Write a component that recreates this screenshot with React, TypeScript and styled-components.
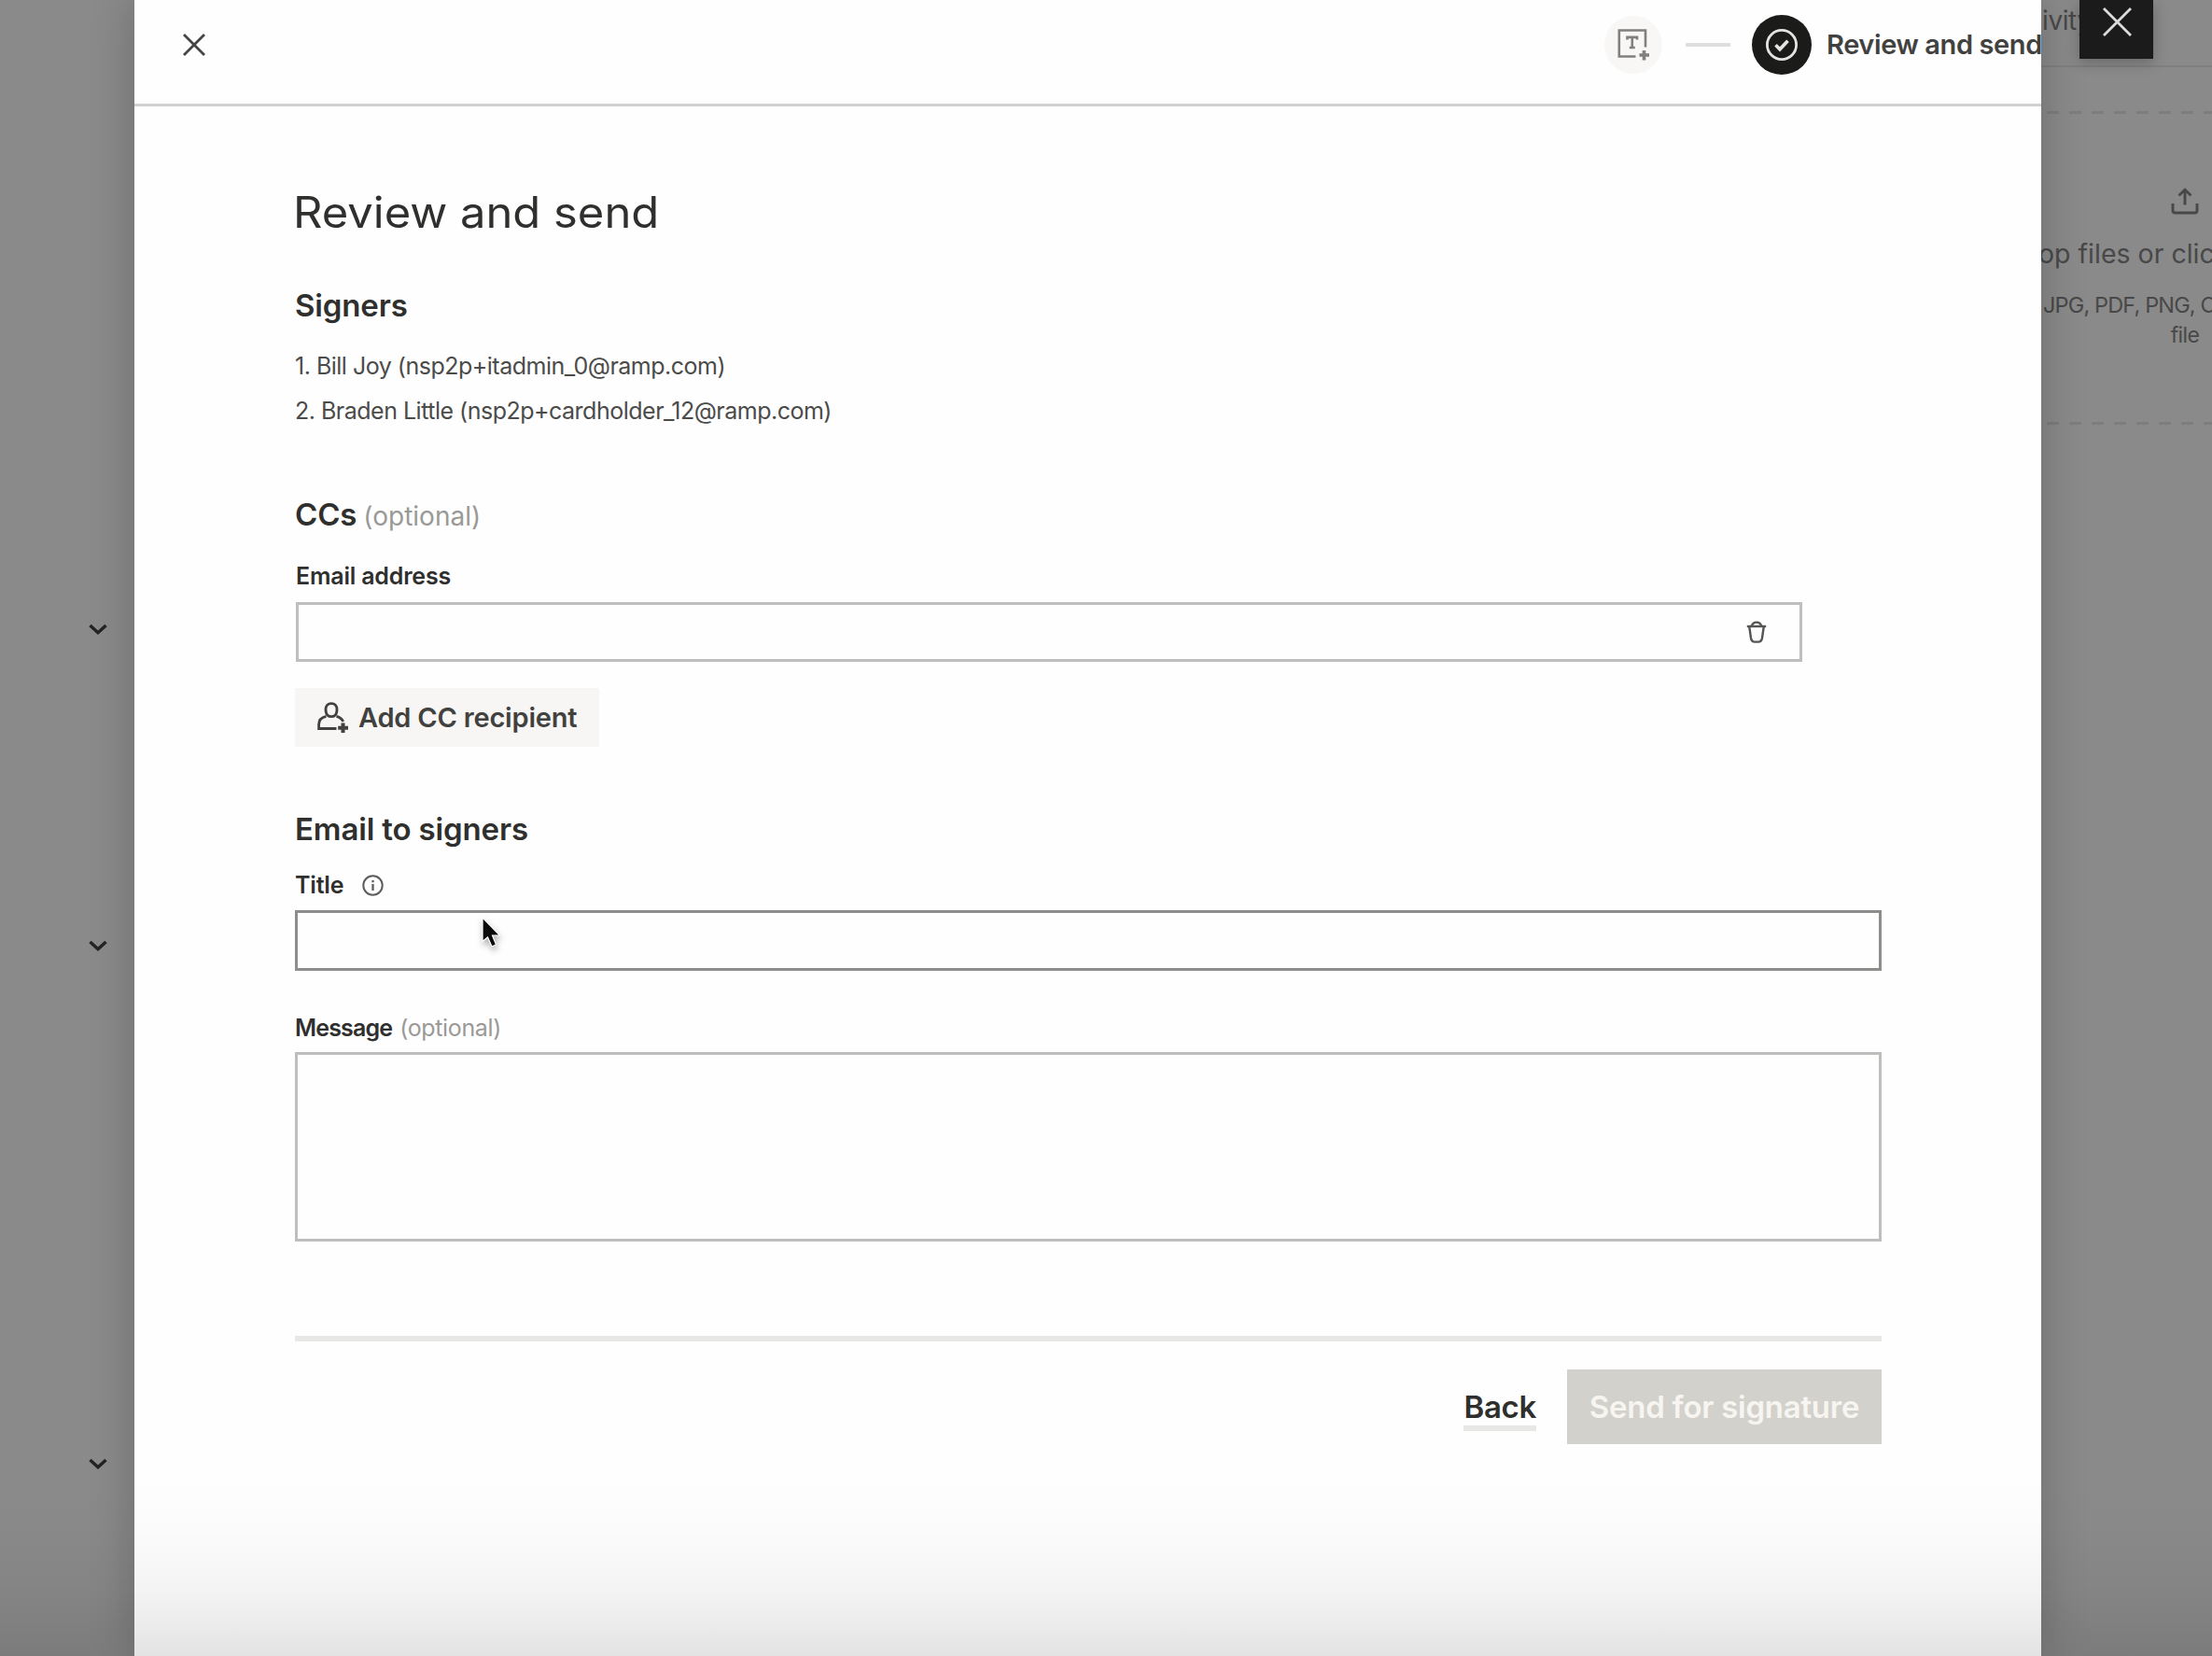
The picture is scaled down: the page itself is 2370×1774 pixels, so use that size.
import React from "react";
import styled, { createGlobalStyle } from "styled-components";

const GlobalStyle = createGlobalStyle`
  *, *::before, *::after { box-sizing: border-box; }
  body {
    margin: 0;
    background: #8a8a8a;
    font-family: Inter, "Liberation Sans", sans-serif;
    color: #2f2f2e;
  }
  svg { display: block; flex-shrink: 0; }
`;

const Screen = styled.div`
  position: relative;
  display: grid;
  grid-template-columns: 144px 2043px minmax(0, 1fr);
  width: 2370px;
  height: 1774px;
  overflow: hidden;
  background: #8a8a8a;

  &::after {
    content: "";
    position: absolute;
    z-index: 3;
    left: 0;
    right: 0;
    bottom: 0;
    height: 190px;
    pointer-events: none;
    background: linear-gradient(
      to bottom,
      rgba(0, 0, 0, 0) 0%,
      rgba(0, 0, 0, 0.012) 30%,
      rgba(0, 0, 0, 0.045) 65%,
      rgba(0, 0, 0, 0.105) 100%
    );
  }
`;

const Sidebar = styled.aside`
  display: flex;
  flex-direction: column;
  align-items: flex-end;
  padding: 668px 29px 0 0;
`;

const ChevronSlot = styled.div<{ $height: number }>`
  height: ${(p) => p.$height}px;
`;

const Modal = styled.main`
  position: relative;
  z-index: 1;
  display: flex;
  flex-direction: column;
  background: #fefefe;
  box-shadow: 0 0 44px rgba(0, 0, 0, 0.22);
`;

const Header = styled.header`
  display: flex;
  align-items: center;
  justify-content: space-between;
  height: 114px;
  padding: 0 0 16px 52px;
  border-bottom: 3px solid #d2d1cf;
`;

const IconButton = styled.button`
  display: flex;
  padding: 0;
  border: 0;
  background: none;
  color: #444443;
`;

const Stepper = styled.div`
  display: flex;
  align-items: center;
`;

const StepCircle = styled.div<{ $active?: boolean }>`
  display: flex;
  align-items: center;
  justify-content: center;
  width: ${(p) => (p.$active ? 64 : 62)}px;
  height: ${(p) => (p.$active ? 64 : 62)}px;
  border-radius: 50%;
  background: ${(p) => (p.$active ? "#1b1b1a" : "#f8f7f6")};
  color: ${(p) => (p.$active ? "#e4e4e2" : "#80807e")};
`;

const StepLine = styled.div`
  width: 48px;
  height: 4px;
  margin: 0 23px 0 25px;
  background: #dededc;
`;

const StepLabel = styled.span`
  width: 230px;
  margin-left: 16px;
  font-size: 29px;
  line-height: 40px;
  font-weight: 600;
  letter-spacing: -0.4px;
  white-space: nowrap;
  color: #414140;
`;

const Content = styled.div`
  display: flex;
  flex-direction: column;
  width: 1700px;
  margin: 85px 0 0 172px;
`;

const PageTitle = styled.h1`
  margin: 0 0 52px -2px;
  font-size: 46px;
  line-height: 56px;
  font-weight: 400;
  transform: scaleX(1.063);
  transform-origin: left center;
`;

const Section = styled.section<{ $gap: number }>`
  display: flex;
  flex-direction: column;
  margin-bottom: ${(p) => p.$gap}px;
`;

const SectionTitle = styled.h2`
  display: flex;
  align-items: baseline;
  gap: 7px;
  height: 40px;
  margin: 0;
  font-size: 33px;
  line-height: 40px;
  font-weight: 600;
  letter-spacing: -0.15px;
`;

const Optional = styled.span<{ $size: number }>`
  font-size: ${(p) => p.$size}px;
  font-weight: 400;
  letter-spacing: ${(p) => (p.$size > 26 ? 0 : -0.35)}px;
  color: #9a9996;
`;

const SignerList = styled.ol`
  display: flex;
  flex-direction: column;
  margin: 21px 0 0;
  padding: 0;
  list-style: none;
`;

const Signer = styled.li`
  font-size: 25px;
  line-height: 48px;
  letter-spacing: -0.5px;
  color: #4b4b4a;
`;

const Field = styled.div<{ $top: number; $inset?: boolean }>`
  display: flex;
  flex-direction: column;
  margin: ${(p) => p.$top}px 0 0 ${(p) => (p.$inset ? 1 : 0)}px;
  width: ${(p) => (p.$inset ? "1614px" : "auto")};
`;

const Label = styled.label<{ $gap: number; $tight?: boolean }>`
  display: flex;
  align-items: baseline;
  gap: 8px;
  height: 32px;
  margin-bottom: ${(p) => p.$gap}px;
  font-size: 25px;
  line-height: 32px;
  font-weight: 600;
  letter-spacing: ${(p) => (p.$tight ? -0.85 : -0.2)}px;
`;

const InfoSlot = styled.span`
  align-self: center;
  margin-left: 12px;
  color: #5c5c5b;
`;

const InputBox = styled.div<{ $height: number; $focused?: boolean }>`
  display: flex;
  align-items: center;
  justify-content: flex-end;
  height: ${(p) => p.$height}px;
  padding-right: 35px;
  border: 3px solid ${(p) => (p.$focused ? "#8d8d8c" : "#bfbebc")};
  background: #fefefe;
  color: #555554;
`;

const AddButton = styled.button`
  display: flex;
  align-items: center;
  align-self: flex-start;
  gap: 11px;
  width: 326px;
  height: 63px;
  margin-top: 28px;
  padding: 0 0 0 24px;
  border: 0;
  background: #f7f6f5;
  font-family: inherit;
  font-size: 29px;
  font-weight: 600;
  letter-spacing: -0.2px;
  white-space: nowrap;
  color: #414140;
`;

const Divider = styled.hr`
  width: 100%;
  height: 6px;
  margin: 0 0 30px;
  border: 0;
  background: #e8e8e7;
`;

const Actions = styled.footer`
  display: flex;
  justify-content: flex-end;
  gap: 33px;
`;

const BackLink = styled.a`
  height: 46px;
  margin-top: 20px;
  border-bottom: 6px solid #e7e7e6;
  font-size: 33px;
  line-height: 40px;
  font-weight: 600;
  letter-spacing: -0.3px;
`;

const SendButton = styled.button`
  width: 337px;
  height: 80px;
  padding: 0;
  border: 0;
  background: #d3d1cb;
  font-family: inherit;
  font-size: 33px;
  font-weight: 600;
  letter-spacing: -0.25px;
  white-space: nowrap;
  color: #f7f5f1;
`;

const Backdrop = styled.aside`
  display: flex;
  flex-direction: column;
  min-width: 0;
  overflow: hidden;
  color: #484848;
`;

const BackdropBar = styled.div`
  display: flex;
  height: 72px;
  border-bottom: 2px solid #7f7f7f;
`;

const TabText = styled.span`
  padding-left: 1px;
  font-size: 28px;
  line-height: 45px;
  letter-spacing: -0.4px;
`;

const CloseButton = styled.button`
  position: absolute;
  z-index: 2;
  top: 0;
  right: 63px;
  display: flex;
  justify-content: center;
  width: 79px;
  height: 63px;
  padding: 8px 0 0 2px;
  border: 0;
  background: #1b1b1b;
  box-shadow: 0 4px 14px rgba(0, 0, 0, 0.25);
  color: #dcdcdc;
`;

const DropZone = styled.div`
  position: relative;
  display: flex;
  flex-direction: column;
  width: 308px;
  height: 336px;
  margin-top: 47px;
  padding-top: 82px;
  white-space: nowrap;
`;

const DashLine = styled.div<{ $bottom?: boolean }>`
  position: absolute;
  left: 0;
  right: 0;
  ${(p) => (p.$bottom ? "bottom" : "top")}: 0;
  height: 3px;
  background: repeating-linear-gradient(to right, #7d7d7d 0 13px, transparent 13px 24px);
  background-position: 6px 0;
`;

const UploadSlot = styled.div`
  width: 308px;
  display: flex;
  justify-content: center;
`;

const DropTitle = styled.div`
  margin: 22px 0 0 -3px;
  font-size: 28.5px;
  line-height: 40px;
`;

const DropHint = styled.div`
  margin-top: 19px;
  padding-left: 2px;
  font-size: 23.5px;
  line-height: 32px;
  letter-spacing: -0.85px;
`;

const DropHintEnd = styled.div`
  width: 308px;
  text-align: center;
  font-size: 23px;
  line-height: 32px;
  letter-spacing: -0.6px;
`;

const Pointer = styled.div`
  position: absolute;
  z-index: 2;
  left: 515px;
  top: 981px;
  filter: drop-shadow(1px 4px 3px rgba(0, 0, 0, 0.3));
`;

const CrossIcon = ({ size, stroke }: { size: number; stroke: number }) => (
  <svg width={size} height={size} viewBox={`0 0 ${size} ${size}`} fill="none" stroke="currentColor" strokeWidth={stroke}>
    <path d={`M1 1 L${size - 1} ${size - 1} M${size - 1} 1 L1 ${size - 1}`} />
  </svg>
);

const ChevronIcon = () => (
  <svg width="20" height="13" viewBox="0 0 20 13" fill="none" stroke="#232323" strokeWidth="3.4">
    <path d="M1.5 2 L10 9.8 L18.5 2" />
  </svg>
);

const TextFieldIcon = () => (
  <svg width="34" height="34" viewBox="0 0 34 34" fill="none" stroke="currentColor" strokeWidth="2.6">
    <path d="M19.5 29.5 H1.8 V1.5 H30 V19.5" />
    <path d="M10.5 11.5 V8.9 H21 V11.5 M15.8 8.9 V20 M12.8 20 H18.8" />
    <path d="M28.5 23 V33.5 M23.5 28 H34" strokeWidth="3.6" />
  </svg>
);

const CheckCircleIcon = () => (
  <svg width="36" height="36" viewBox="0 0 36 36" fill="none" stroke="currentColor">
    <circle cx="18" cy="18" r="15.6" strokeWidth="2.8" />
    <path d="M11.5 18.3 L16 22.8 L24.5 13.8" strokeWidth="3.6" />
  </svg>
);

const TrashIcon = () => (
  <svg width="22" height="24" viewBox="0 0 22 24" fill="none" stroke="currentColor" strokeWidth="2.4">
    <path d="M0.8 6 H21.2" />
    <path d="M5.5 6 C6.5 3 8 1.6 11 1.6 C14 1.6 15.5 3 16.5 6" />
    <path d="M3.2 6 L5 18.5 C5.5 21.5 6.500 22.600 9 22.600 H13 C15.500 22.600 16.500 21.500 17 18.500 L18.800 6" />
  </svg>
);

const PersonAddIcon = () => (
  <svg width="33" height="33" viewBox="0 0 33 33" fill="none" stroke="currentColor" strokeWidth="2.8">
    <path d="M15 1.6 C18.5 1.6 21 4 21 8 C21 12.5 19 15.7 15 15.7 C11 15.7 9 12.5 9 8 C9 4 11.5 1.6 15 1.6 Z" />
    <path d="M9.5 15.3 C5 16.300 1.600 19 1.600 24 V28.500 H20.500" />
    <path d="M20.500 15.300 C24 16.300 26.500 18 27.700 21" />
    <path d="M27.500 22.500 V33 M22.200 27.800 H33" strokeWidth="4" />
  </svg>
);

const InfoIcon = () => (
  <svg width="23" height="23" viewBox="0 0 23 23" fill="none" stroke="currentColor" strokeWidth="2">
    <circle cx="11.5" cy="11.5" r="10.2" />
    <path d="M11.5 10 V17 M11.5 6 V8.3" strokeWidth="2.3" />
  </svg>
);

const UploadIcon = () => (
  <svg width="30" height="29" viewBox="0 0 30 29" fill="none" stroke="currentColor" strokeWidth="2.9">
    <path d="M15 18.5 V2.5 M8.5 8.5 L15 2.2 L21.5 8.5" />
    <path d="M2 17 V24.5 Q2 27 4.5 27 H25.5 Q28 27 28 24.5 V17" />
  </svg>
);

const ArrowPointer = () => (
  <svg width="24" height="36" viewBox="0 0 24 36">
    <path d="M2 2 V27.500 L7.500 23 L12 33 L16.500 31 L12.500 21 H20.500 Z" fill="#0a0a0a" stroke="#ffffff" strokeWidth="1.2" />
  </svg>
);

const signers = [
  "1. Bill Joy (nsp2p+itadmin_0@ramp.com)",
  "2. Braden Little (nsp2p+cardholder_12@ramp.com)",
];

const chevronRows = [339, 555, 40];

export default function App() {
  return (
    <>
      <GlobalStyle />
      <Screen>
        <Sidebar>
          {chevronRows.map((height) => (
            <ChevronSlot key={height} $height={height}>
              <ChevronIcon />
            </ChevronSlot>
          ))}
        </Sidebar>

        <Modal>
          <Header>
            <IconButton aria-label="Close">
              <CrossIcon size={24} stroke={2.8} />
            </IconButton>
            <Stepper>
              <StepCircle>
                <TextFieldIcon />
              </StepCircle>
              <StepLine />
              <StepCircle $active>
                <CheckCircleIcon />
              </StepCircle>
              <StepLabel>Review and send</StepLabel>
            </Stepper>
          </Header>

          <Content>
            <PageTitle>Review and send</PageTitle>

            <Section $gap={67}>
              <SectionTitle>Signers</SectionTitle>
              <SignerList>
                {signers.map((signer) => (
                  <Signer key={signer}>{signer}</Signer>
                ))}
              </SignerList>
            </Section>

            <Section $gap={68}>
              <SectionTitle>
                CCs <Optional $size={28}>(optional)</Optional>
              </SectionTitle>
              <Field $top={30} $inset>
                <Label $gap={12}>Email address</Label>
                <InputBox $height={64}>
                  <TrashIcon />
                </InputBox>
              </Field>
              <AddButton>
                <PersonAddIcon />
                Add CC recipient
              </AddButton>
            </Section>

            <Section $gap={101}>
              <SectionTitle>Email to signers</SectionTitle>
              <Field $top={24}>
                <Label $gap={11}>
                  Title
                  <InfoSlot>
                    <InfoIcon />
                  </InfoSlot>
                </Label>
                <InputBox $height={65} $focused />
              </Field>
              <Field $top={45}>
                <Label $gap={10} $tight>
                  Message <Optional $size={25}>(optional)</Optional>
                </Label>
                <InputBox $height={203} />
              </Field>
            </Section>

            <Divider />
            <Actions>
              <BackLink>Back</BackLink>
              <SendButton disabled>Send for signature</SendButton>
            </Actions>
          </Content>
        </Modal>

        <Backdrop>
          <BackdropBar>
            <TabText>ivity</TabText>
          </BackdropBar>
          <DropZone>
            <DashLine />
            <UploadSlot>
              <UploadIcon />
            </UploadSlot>
            <DropTitle>op files or click</DropTitle>
            <DropHint>JPG, PDF, PNG, C</DropHint>
            <DropHintEnd>file</DropHintEnd>
            <DashLine $bottom />
          </DropZone>
        </Backdrop>

        <CloseButton aria-label="Close panel">
          <CrossIcon size={31} stroke={2.8} />
        </CloseButton>

        <Pointer>
          <ArrowPointer />
        </Pointer>
      </Screen>
    </>
  );
}
